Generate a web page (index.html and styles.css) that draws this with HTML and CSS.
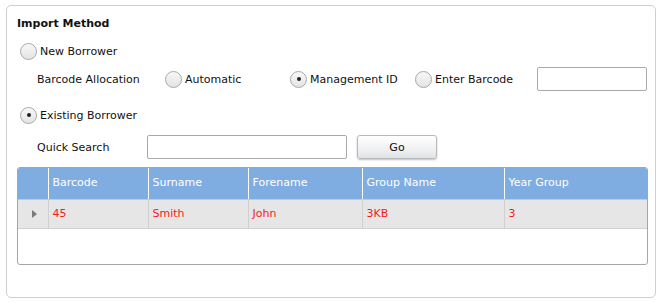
FILE: index.html
```html
<!DOCTYPE html>
<html lang="en">
  <head>
    <meta charset="UTF-8" />
    <title>Import Method</title>
    <link rel="stylesheet" href="styles.css">
  </head>
  <body>
    <div class="panel">
      <div class="panel-title">Import Method</div>

      <!-- New borrower -->
      <div class="row row-new">
        <label class="option"><span class="radio"></span>New Borrower</label>
      </div>
      <div class="row row-barcode">
        <span class="field-label label-alloc">Barcode Allocation</span>
        <label class="option opt-auto"><span class="radio"></span>Automatic</label>
        <label class="option opt-mgmt"><span class="radio checked"></span>Management ID</label>
        <label class="option opt-enter"><span class="radio"></span>Enter Barcode</label>
        <input class="text-box barcode-box" type="text">
      </div>

      <!-- Existing borrower -->
      <div class="row row-existing">
        <label class="option"><span class="radio checked"></span>Existing Borrower</label>
      </div>
      <div class="row row-search">
        <span class="field-label label-search">Quick Search</span>
        <input class="text-box search-box" type="text">
        <button class="go-btn">Go</button>
      </div>

      <!-- Results grid -->
      <div class="grid">
        <table>
          <thead>
            <tr>
              <th class="col-ind"></th>
              <th class="col-barcode">Barcode</th>
              <th class="col-surname">Surname</th>
              <th class="col-forename">Forename</th>
              <th class="col-group">Group Name</th>
              <th>Year Group</th>
            </tr>
          </thead>
          <tbody>
            <tr>
              <td class="col-ind"><span class="row-arrow"></span></td>
              <td>45</td>
              <td>Smith</td>
              <td>John</td>
              <td>3KB</td>
              <td>3</td>
            </tr>
          </tbody>
        </table>
      </div>
    </div>
  </body>
</html>
```

FILE: styles.css
```css
/* --- Reset --- */
* {
  margin: 0;
  padding: 0;
  box-sizing: border-box;
}

body {
  font-family: "DejaVu Sans", Verdana, sans-serif;
  font-size: 11px;
  color: #111;
  background-color: #fff;
  padding: 5px 8px 4px 6px;
}

/* --- Outer panel --- */
.panel {
  border: 1px solid #cfcfcf;
  border-radius: 5px;
  height: 293px;
  padding: 8px 7px 0 10px;
}
.panel-title {
  height: 20px;
  line-height: 20px;
  font-weight: bold;
}

/* --- Form rows --- */
.row {
  display: flex;
  align-items: center;
  height: 24px;
}
.row-new {
  margin-top: 5px;
  padding-left: 3px;
}
.row-barcode {
  margin-top: 4px;
  padding-left: 20px;
}
.row-existing {
  margin-top: 12px;
  padding-left: 3px;
}
.row-search {
  margin-top: 8px;
  padding-left: 20px;
}

.field-label {
  flex-shrink: 0;
}
.label-alloc {
  width: 128px;
}
.label-search {
  width: 110px;
}

.option {
  display: flex;
  align-items: center;
  gap: 3px;
  flex-shrink: 0;
}
.opt-auto,
.opt-mgmt {
  width: 125px;
}
.opt-enter {
  width: 122px;
}

/* --- Radio buttons --- */
.radio {
  width: 17px;
  height: 17px;
  border: 1px solid #a8a8a8;
  border-radius: 50%;
  background: linear-gradient(#f7f7f7, #e4e4e4);
  display: flex;
  align-items: center;
  justify-content: center;
}
.radio.checked::after {
  content: "";
  width: 4px;
  height: 4px;
  border-radius: 50%;
  background-color: #222;
}

/* --- Inputs --- */
.text-box {
  height: 24px;
  border: 1px solid #a9a9a9;
  border-radius: 2px;
  background-color: #fff;
}
.barcode-box {
  width: 110px;
}
.search-box {
  width: 200px;
}
.go-btn {
  margin-left: 10px;
  width: 80px;
  height: 24px;
  border: 1px solid #b9b9b9;
  border-radius: 3px;
  background: linear-gradient(#ffffff, #f3f3f3 50%, #e0e4e8);
  box-shadow: 0 1px 2px rgba(0,0,0,0.25);
  font-family: inherit;
  font-size: 11px;
  color: #111;
}

/* --- Grid --- */
.grid {
  margin-top: 8px;
  width: 631px;
  height: 98px;
  border: 1px solid #a6a6a6;
  border-radius: 3px;
  overflow: hidden;
}
.grid table {
  width: 100%;
  border-collapse: collapse;
  table-layout: fixed;
}
.grid th {
  height: 31px;
  background-color: #80ade1;
  color: #fff;
  font-weight: normal;
  text-align: left;
  padding-left: 4px;
  padding-bottom: 1px;
  border-left: 1px solid #fff;
  border-bottom: 1px solid #c8c8c8;
}
.grid td {
  height: 29px;
  background-color: #e6e6e6;
  color: #f41c1c;
  padding-left: 4px;
  border-left: 1px solid #d0d0d0;
  border-bottom: 1px solid #d0d0d0;
}
.grid th:first-child,
.grid td:first-child {
  border-left: none;
}
.col-ind {
  width: 30px;
}
.col-barcode,
.col-surname {
  width: 100px;
}
.col-forename {
  width: 114px;
}
.col-group {
  width: 142px;
}
.grid td.col-ind {
  padding-left: 14px;
}
.row-arrow {
  display: block;
  width: 0;
  height: 0;
  border-top: 4px solid transparent;
  border-bottom: 4px solid transparent;
  border-left: 5px solid #7a7a7a;
}
```
